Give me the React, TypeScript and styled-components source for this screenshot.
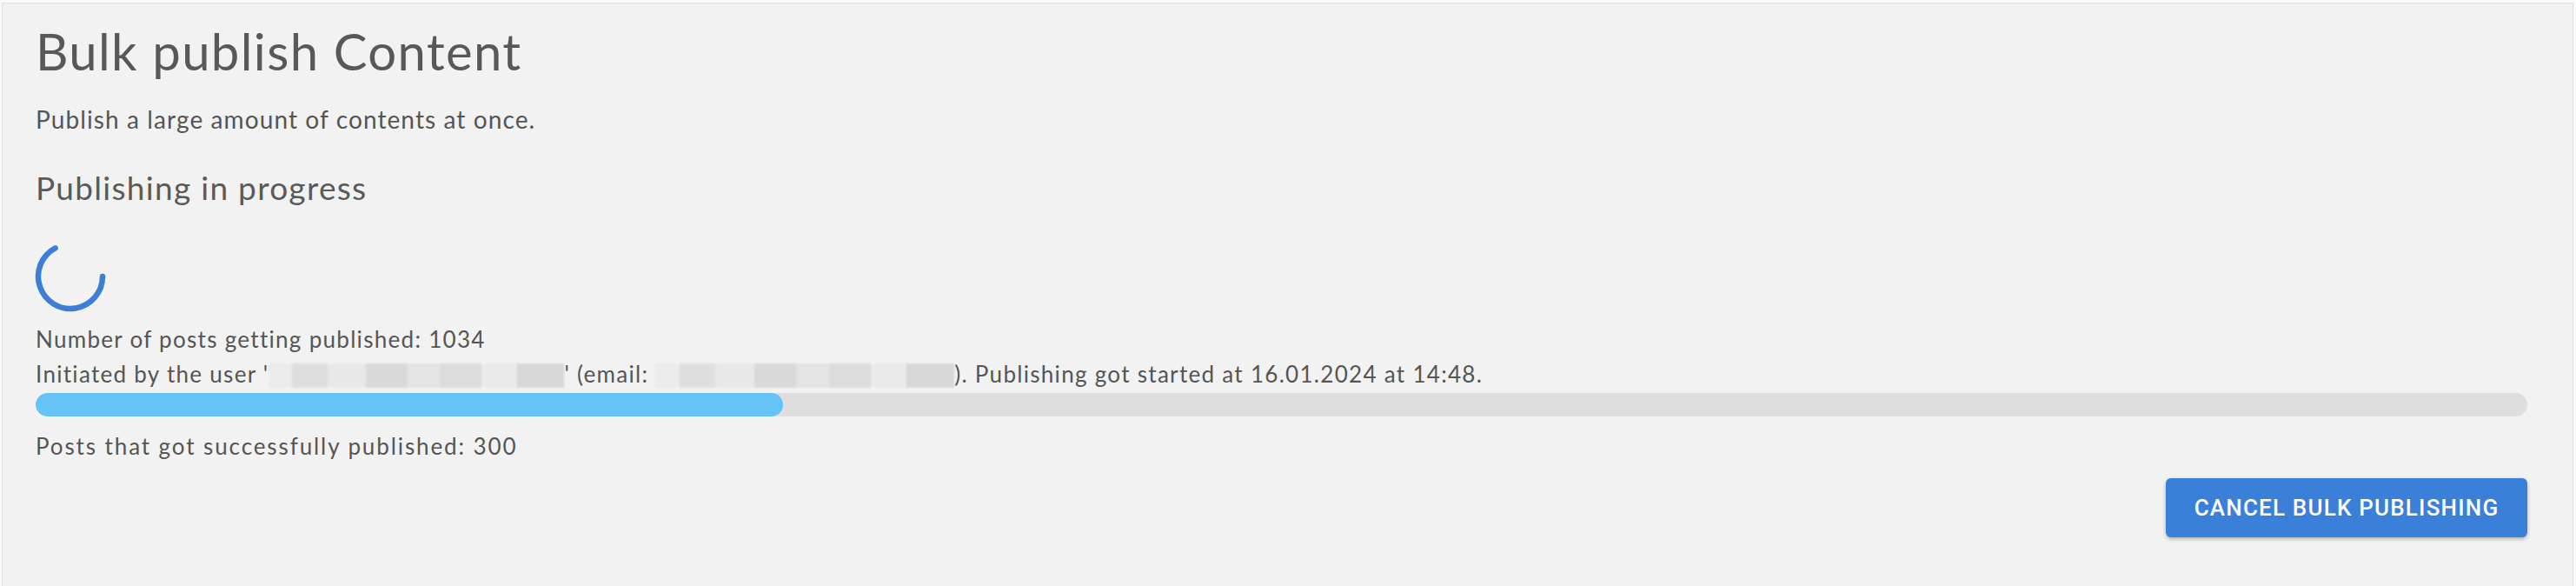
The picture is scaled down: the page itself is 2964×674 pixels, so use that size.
import React from 'react';
import styled, { createGlobalStyle } from 'styled-components';

const GlobalStyle = createGlobalStyle`
  html, body {
    margin: 0;
    padding: 0;
    background: #fafafa;
  }
  body {
    font-family: Lato, "Open Sans", "Noto Sans", sans-serif;
    color: #555;
    overflow: hidden;
  }
`;

const Page = styled.div`
  padding: 3px 3px 0 2px;
  height: 674px;
  box-sizing: border-box;
`;

const Card = styled.section`
  background: #f2f2f2;
  border: 1px solid #e0e0e0;
  border-bottom: none;
  height: 100%;
  box-sizing: border-box;
  padding: 20px 52px 0 38px;
  display: flex;
  flex-direction: column;
`;

const Title = styled.h1`
  margin: 0;
  font-size: 58px;
  font-weight: 400;
  letter-spacing: 1.4px;
  line-height: 1.2;
  color: #585858;
`;

const Subtitle = styled.p`
  margin: 27px 0 0;
  font-size: 28px;
  letter-spacing: 1.1px;
  line-height: 1.2;
  color: #555;
`;

const SectionTitle = styled.h2`
  margin: 40px 0 0;
  font-size: 37px;
  font-weight: 400;
  letter-spacing: 1.3px;
  line-height: 1.2;
  color: #5a5a5a;
`;

const Spinner = styled.svg`
  display: block;
  width: 84px;
  height: 84px;
  margin: 37px 0 0 -2px;
`;

const Info = styled.div`
  margin-top: 10px;
  font-size: 26px;
  letter-spacing: 1.3px;
  line-height: 40px;
  color: #555;
`;

const InfoLine = styled.div`
  white-space: nowrap;
`;

const Redacted = styled.span<{ $w: number }>`
  display: inline-block;
  vertical-align: -6px;
  width: ${p => p.$w}px;
  height: 28px;
  background:
    linear-gradient(90deg,
      #ececec 0 8%, #dedede 8% 20%, #e8e8e8 20% 33%, #d9d9d9 33% 47%,
      #e4e4e4 47% 58%, #dcdcdc 58% 72%, #eaeaea 72% 84%, #d7d7d7 84% 100%);
  filter: blur(1px);
`;

const Track = styled.div`
  margin-top: 2px;
  height: 27px;
  border-radius: 14px;
  background: #dedede;
  overflow: hidden;
`;

const Fill = styled.div`
  height: 100%;
  border-radius: 14px;
  background: #66c3f7;
`;

const Success = styled.div`
  margin-top: 14px;
  font-size: 26px;
  letter-spacing: 1.9px;
  line-height: 40px;
  color: #555;
`;

const Actions = styled.div`
  display: flex;
  justify-content: flex-end;
  margin-top: 17px;
`;

const CancelButton = styled.button`
  height: 68px;
  width: 416px;
  padding: 0;
  border: none;
  border-radius: 6px;
  background: #3a80d8;
  color: #fff;
  font-family: Roboto, "Liberation Sans", Arial, sans-serif;
  font-size: 26px;
  font-weight: 500;
  letter-spacing: 1.2px;
  box-shadow: 0 2px 4px rgba(0, 0, 0, 0.28);
  cursor: pointer;
`;

const total = 1034;
const done = 300;

export default function App() {
  const pct = Math.ceil((done / total) * 100);
  return (
    <>
      <GlobalStyle />
      <Page>
        <Card>
          <Title>Bulk publish Content</Title>
          <Subtitle>Publish a large amount of contents at once.</Subtitle>
          <SectionTitle>Publishing in progress</SectionTitle>
          <Spinner viewBox="0 0 84 84">
            <path
              d="M 79 42 A 37 37 0 1 1 24.6 9.3"
              fill="none"
              stroke="#3b7fd6"
              strokeWidth="6.5"
              strokeLinecap="round"
            />
          </Spinner>
          <Info>
            <InfoLine>Number of posts getting published: {total}</InfoLine>
            <InfoLine>
              Initiated by the user '<Redacted $w={340} />' (email: <Redacted $w={344} />). Publishing got started at 16.01.2024 at 14:48.
            </InfoLine>
          </Info>
          <Track>
            <Fill style={{ width: `${pct}%` }} />
          </Track>
          <Success>Posts that got successfully published: {done}</Success>
          <Actions>
            <CancelButton>CANCEL BULK PUBLISHING</CancelButton>
          </Actions>
        </Card>
      </Page>
    </>
  );
}
